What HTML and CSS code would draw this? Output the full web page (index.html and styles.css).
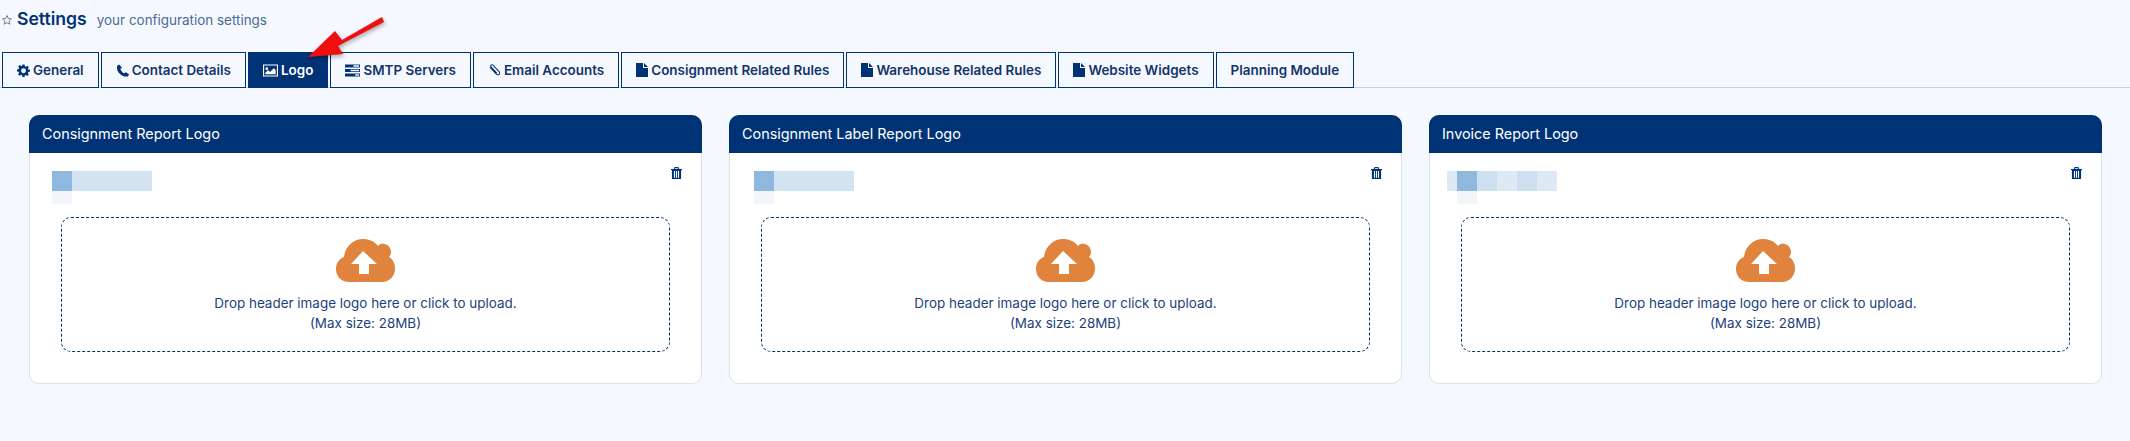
FILE: index.html
```html
<!DOCTYPE html>
<html lang="en">
<head>
  <meta charset="UTF-8">
  <title>Settings</title>
  <link rel="stylesheet" href="styles.css">
</head>
<body>
  <svg width="0" height="0" class="defs">
    <symbol id="i-file" viewBox="0 0 12 14"><path d="M0 0h7v5h5v9H0zM8 0l4 4H8z"/></symbol>
    <symbol id="i-trash" viewBox="0 0 12 13">
      <path fill-rule="evenodd" d="M4 0h4l1 2h3v1.400h-1V13H1V3.400H0V2h3zM4.600 1.200 4.300 2h3.400l-.3-.8zM3.200 4.400v7.200h1.200V4.400zM5.400 4.400v7.200h1.200V4.400zM7.600 4.400v7.200h1.200V4.400z"/>
    </symbol>
    <symbol id="i-cloud" viewBox="0 0 59 43">
      <path d="M13 43C5 43 0 37 0 30c0-6 3-10 8-12C9 8 17 0 27 0c6 0 11 2 15 7 2-2 4-3 6-2 4 0 7 4 7 8 0 2-1 4-2 5 4 2 6 7 6 12 0 7-6 13-13 13z"/>
      <path class="cloud-arrow" d="M27 12 41 25H33V35H23V25H15z"/>
    </symbol>
  </svg>

  <header class="page-head">
    <svg class="star" viewBox="0 0 24 24"><path d="M12 3l2.700 6 6.300.7-4.700 4.300 1.300 6.500L12 17.200l-5.600 3.300 1.300-6.500L3 9.700 9.300 9z"/></svg>
    <h1>Settings</h1>
    <span class="subtitle">your configuration settings</span>
  </header>

  <nav class="tabs">
    <a class="tab">
      <svg class="ico" viewBox="0 0 24 24"><path d="M10 1h4l.6 3.200 1.900.8 2.700-1.800 2.800 2.800-1.800 2.700.8 1.900L24 10v4l-3.200.6-.8 1.900 1.800 2.700-2.800 2.800-2.700-1.800-1.900.8L14 24h-4l-.6-3.200-1.900-.8-2.700 1.800-2.800-2.800 1.800-2.700-.8-1.900L0 14v-4l3.200-.6.800-1.900-1.800-2.700L5 2l2.700 1.800 1.900-.8zM12 8a4.500 4.500 0 1 0 0 9 4.500 4.500 0 0 0 0-9z"/></svg>General
    </a>
    <a class="tab">
      <svg class="ico" viewBox="0 0 24 24"><path d="M6 1 2 3C1 9 3 14 7 18s9 6 15 5l2-4-6-4-3 2c-3-1-6-5-7-8l3-2z"/></svg>Contact Details
    </a>
    <a class="tab active">
      <svg class="ico ico-wide" viewBox="0 0 16 13"><path fill-rule="evenodd" d="M0 0h16v13H0zM1.200 1.200v10.600h13.600V1.200z"/><path d="M2.500 10.500V9l3-3 2 2 4-4 2 2v4.500zM4 3a1.500 1.500 0 1 1 0 3 1.500 1.500 0 0 1 0-3z"/></svg>Logo
    </a>
    <a class="tab">
      <svg class="ico ico-wide" viewBox="0 0 16 13"><path fill-rule="evenodd" d="M0 0h16v3.400H0zM0 4.800h16v3.400H0zM0 9.600h16V13H0zM9 1v1.400h6V1zM6 5.800v1.400h9V5.800zM11 10.600V12h4v-1.400z"/></svg>SMTP Servers
    </a>
    <a class="tab">
      <svg class="ico ico-clip" viewBox="0 0 14 14"><path d="M2 3.500 9 11a2 2 0 0 0 3-2.800L5 1a1.400 1.400 0 0 0-2 1.800l6.500 7"/></svg>Email Accounts
    </a>
    <a class="tab"><svg class="ico ico-file"><use href="#i-file"/></svg>Consignment Related Rules</a>
    <a class="tab"><svg class="ico ico-file"><use href="#i-file"/></svg>Warehouse Related Rules</a>
    <a class="tab"><svg class="ico ico-file"><use href="#i-file"/></svg>Website Widgets</a>
    <a class="tab">Planning Module</a>
  </nav>

  <main class="cards">
    <section class="card">
      <h2 class="card-title">Consignment Report Logo</h2>
      <div class="card-body">
        <div class="logo-row">
          <div class="blur-logo">
            <div class="blur-line"><i class="px px-dark"></i><i class="px px-long"></i></div>
            <i class="px-under"></i>
          </div>
          <svg class="trash"><use href="#i-trash"/></svg>
        </div>
        <div class="dropzone">
          <svg class="cloud"><use href="#i-cloud"/></svg>
          <p>Drop header image logo here or click to upload.<br>(Max size: 28MB)</p>
        </div>
      </div>
    </section>

    <section class="card">
      <h2 class="card-title">Consignment Label Report Logo</h2>
      <div class="card-body">
        <div class="logo-row">
          <div class="blur-logo blur-label">
            <div class="blur-line"><i class="px px-dark"></i><i class="px px-long"></i></div>
            <i class="px-under"></i>
          </div>
          <svg class="trash"><use href="#i-trash"/></svg>
        </div>
        <div class="dropzone">
          <svg class="cloud"><use href="#i-cloud"/></svg>
          <p>Drop header image logo here or click to upload.<br>(Max size: 28MB)</p>
        </div>
      </div>
    </section>

    <section class="card">
      <h2 class="card-title">Invoice Report Logo</h2>
      <div class="card-body">
        <div class="logo-row">
          <div class="blur-logo blur-invoice">
            <div class="blur-line"><i class="px px-edge"></i><i class="px px-dark"></i><i class="px px-a"></i><i class="px px-b"></i><i class="px px-a"></i><i class="px px-b"></i></div>
            <i class="px-under"></i>
          </div>
          <svg class="trash"><use href="#i-trash"/></svg>
        </div>
        <div class="dropzone">
          <svg class="cloud"><use href="#i-cloud"/></svg>
          <p>Drop header image logo here or click to upload.<br>(Max size: 28MB)</p>
        </div>
      </div>
    </section>
  </main>

  <svg class="arrow" viewBox="0 0 100 60" width="100" height="60">
    <path d="M82 9 42 32 35 23 8 49 43 46 38 38 84 14z"/>
  </svg>
</body>
</html>
```

FILE: styles.css
```css
* {
  box-sizing: border-box;
}
body {
  margin: 0;
  min-height: 441px;
  position: relative;
  background: #f5f9ff;
  color: #003375;
  font-family: Inter, "Liberation Sans", sans-serif;
}
.defs {
  position: absolute;
}

.page-head {
  display: flex;
  align-items: baseline;
  height: 52px;
  padding: 7px 0 0 1px;
}
.star {
  width: 12px;
  height: 12px;
  margin-right: 4px;
  align-self: center;
  margin-top: -20px;
  fill: none;
  stroke: #56617a;
  stroke-width: 1.6;
}
.page-head h1 {
  margin: 0;
  font-size: 17.600px;
  line-height: 24px;
  font-weight: 600;
}
.subtitle {
  margin-left: 10px;
  font-size: 13.440px;
  color: #4a6a94;
}

.tabs {
  display: flex;
  gap: 2px;
  height: 36px;
  padding-left: 2px;
  border-bottom: 1px solid #c3d0e4;
}
.tab {
  display: flex;
  align-items: center;
  justify-content: center;
  height: 36px;
  padding: 0 14px;
  border: 1px solid #003375;
  font-size: 13.440px;
  font-weight: 600;
  white-space: nowrap;
  color: #14346b;
}
.tab.active {
  background: #003375;
  color: #fff;
}
.ico {
  width: 13px;
  height: 13px;
  margin-right: 3px;
  fill: #003375;
}
.active .ico {
  fill: #fff;
}
.ico-wide {
  width: 15px;
}
.ico-clip {
  fill: none;
  stroke: #003375;
  stroke-width: 1.100;
}
.ico-file {
  width: 12px;
  height: 14px;
}

.cards {
  display: grid;
  grid-template-columns: repeat(3, 1fr);
  gap: 27px;
  padding: 27px 28px 0 29px;
}
.card {
  height: 269px;
  border: 1px solid #dde2ea;
  border-radius: 10px;
  background: #fff;
}
.card-title {
  height: 38px;
  margin: -1px -1px 0;
  padding: 0 13px;
  border-radius: 10px 10px 0 0;
  background: #003375;
  color: #fff;
  font-size: 14.400px;
  font-weight: 400;
  line-height: 37px;
}
.card-body {
  padding: 18px 22px 0 22px;
}
.logo-row {
  display: flex;
  justify-content: space-between;
  height: 46px;
}
.blur-logo {
  display: flex;
  flex-direction: column;
  width: 100px;
}
.blur-label {
  margin-left: 2px;
}
.blur-line {
  display: flex;
  height: 20px;
}
.px {
  width: 20px;
  height: 20px;
}
.px-dark {
  background: #8fb8de;
}
.px-long {
  width: 80px;
  background: #d3e3f2;
}
.px-edge {
  width: 10px;
  background: #dde9f4;
}
.px-a {
  background: #cddff0;
}
.px-b {
  background: #dde9f4;
}
.px-under {
  display: block;
  width: 20px;
  height: 13px;
  background: #f2f6fb;
}
.blur-invoice .px-under {
  margin-left: 10px;
}
.blur-invoice {
  width: 110px;
  margin-left: -5px;
}
.trash {
  width: 11px;
  height: 12px;
  margin: -4px -3px 0 0;
  fill: #003375;
}

.dropzone {
  height: 135px;
  margin: 0 9px;
  padding-top: 21px;
  border: 1px dashed #003375;
  border-radius: 10px;
  text-align: center;
}
.cloud {
  display: block;
  width: 59px;
  height: 43px;
  margin: 0 auto;
  fill: #e0833d;
}
.cloud-arrow {
  fill: #fff;
}
.dropzone p {
  margin: 11px 0 0;
  font-size: 13.440px;
  line-height: 20px;
  color: #1c3f7c;
}

/* red annotation arrow pasted over the tabs */
.arrow {
  position: absolute;
  left: 300px;
  top: 8px;
  fill: #f00f0f;
  filter: drop-shadow(1px 2px 2px rgba(0, 0, 0, 0.35));
}
```
